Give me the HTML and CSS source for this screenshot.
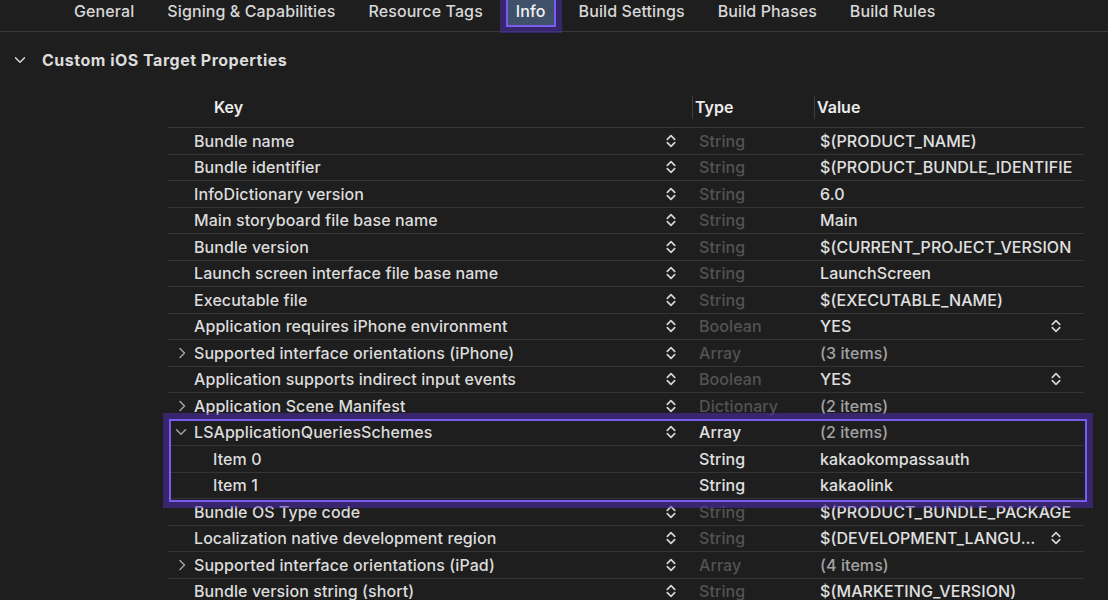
FILE: index.html
```html
<!DOCTYPE html>
<html lang="en">
<head>
<meta charset="utf-8">
<title>Info</title>
<link rel="stylesheet" href="styles.css">
</head>
<body>
<svg class="defs" xmlns="http://www.w3.org/2000/svg">
  <symbol id="updown" viewBox="0 0 10 14">
    <path d="M1.3 5.3 L5 1.6 L8.7 5.3 M1.3 8.7 L5 12.4 L8.7 8.7" fill="none" stroke="currentColor" stroke-width="1.7" stroke-linecap="round" stroke-linejoin="round"/>
  </symbol>
  <symbol id="right" viewBox="0 0 8 12">
    <path d="M2 1.5 L6.5 6 L2 10.5" fill="none" stroke="currentColor" stroke-width="1.5" stroke-linecap="round" stroke-linejoin="round"/>
  </symbol>
  <symbol id="down" viewBox="0 0 12 8">
    <path d="M1.5 1.8 L6 6.3 L10.5 1.8" fill="none" stroke="currentColor" stroke-width="1.5" stroke-linecap="round" stroke-linejoin="round"/>
  </symbol>
</svg>

<nav class="tabs">
  <span class="tab">General</span>
  <span class="tab">Signing &amp; Capabilities</span>
  <span class="tab">Resource Tags</span>
  <span class="tab active">Info</span>
  <span class="tab">Build Settings</span>
  <span class="tab">Build Phases</span>
  <span class="tab">Build Rules</span>
</nav>

<div class="section">
  <svg class="sec-chev"><use href="#down"/></svg>
  <span>Custom iOS Target Properties</span>
</div>

<div class="plist">
  <div class="head">
    <div class="h-key">Key</div>
    <div class="h-type">Type</div>
    <div class="h-value">Value</div>
  </div>

  <div class="row">
    <div class="key"><span class="disc"></span><span class="name">Bundle name</span><svg class="step"><use href="#updown"/></svg></div>
    <div class="type dim">String</div>
    <div class="value"><span class="vtext">$(PRODUCT_NAME)</span></div>
  </div>
  <div class="row">
    <div class="key"><span class="disc"></span><span class="name">Bundle identifier</span><svg class="step"><use href="#updown"/></svg></div>
    <div class="type dim">String</div>
    <div class="value"><span class="vtext">$(PRODUCT_BUNDLE_IDENTIFIE</span></div>
  </div>
  <div class="row">
    <div class="key"><span class="disc"></span><span class="name">InfoDictionary version</span><svg class="step"><use href="#updown"/></svg></div>
    <div class="type dim">String</div>
    <div class="value"><span class="vtext">6.0</span></div>
  </div>
  <div class="row">
    <div class="key"><span class="disc"></span><span class="name">Main storyboard file base name</span><svg class="step"><use href="#updown"/></svg></div>
    <div class="type dim">String</div>
    <div class="value"><span class="vtext">Main</span></div>
  </div>
  <div class="row">
    <div class="key"><span class="disc"></span><span class="name">Bundle version</span><svg class="step"><use href="#updown"/></svg></div>
    <div class="type dim">String</div>
    <div class="value"><span class="vtext">$(CURRENT_PROJECT_VERSION</span></div>
  </div>
  <div class="row">
    <div class="key"><span class="disc"></span><span class="name">Launch screen interface file base name</span><svg class="step"><use href="#updown"/></svg></div>
    <div class="type dim">String</div>
    <div class="value"><span class="vtext">LaunchScreen</span></div>
  </div>
  <div class="row">
    <div class="key"><span class="disc"></span><span class="name">Executable file</span><svg class="step"><use href="#updown"/></svg></div>
    <div class="type dim">String</div>
    <div class="value"><span class="vtext">$(EXECUTABLE_NAME)</span></div>
  </div>
  <div class="row">
    <div class="key"><span class="disc"></span><span class="name">Application requires iPhone environment</span><svg class="step"><use href="#updown"/></svg></div>
    <div class="type dim">Boolean</div>
    <div class="value"><span class="vtext">YES</span><svg class="vstep"><use href="#updown"/></svg></div>
  </div>
  <div class="row">
    <div class="key"><span class="disc"><svg class="chev-r"><use href="#right"/></svg></span><span class="name">Supported interface orientations (iPhone)</span><svg class="step"><use href="#updown"/></svg></div>
    <div class="type dim">Array</div>
    <div class="value"><span class="vtext count">(3 items)</span></div>
  </div>
  <div class="row">
    <div class="key"><span class="disc"></span><span class="name">Application supports indirect input events</span><svg class="step"><use href="#updown"/></svg></div>
    <div class="type dim">Boolean</div>
    <div class="value"><span class="vtext">YES</span><svg class="vstep"><use href="#updown"/></svg></div>
  </div>
  <div class="row">
    <div class="key"><span class="disc"><svg class="chev-r"><use href="#right"/></svg></span><span class="name">Application Scene Manifest</span><svg class="step"><use href="#updown"/></svg></div>
    <div class="type dim">Dictionary</div>
    <div class="value"><span class="vtext count">(2 items)</span></div>
  </div>

  <div class="group">
    <div class="row">
      <div class="key"><span class="disc"><svg class="chev-d"><use href="#down"/></svg></span><span class="name">LSApplicationQueriesSchemes</span><svg class="step"><use href="#updown"/></svg></div>
      <div class="type">Array</div>
      <div class="value"><span class="vtext count">(2 items)</span></div>
    </div>
    <div class="row">
      <div class="key item"><span class="name">Item 0</span></div>
      <div class="type">String</div>
      <div class="value"><span class="vtext">kakaokompassauth</span></div>
    </div>
    <div class="row">
      <div class="key item"><span class="name">Item 1</span></div>
      <div class="type">String</div>
      <div class="value"><span class="vtext">kakaolink</span></div>
    </div>
  </div>

  <div class="row">
    <div class="key"><span class="disc"></span><span class="name">Bundle OS Type code</span><svg class="step"><use href="#updown"/></svg></div>
    <div class="type dim">String</div>
    <div class="value"><span class="vtext">$(PRODUCT_BUNDLE_PACKAGE</span></div>
  </div>
  <div class="row">
    <div class="key"><span class="disc"></span><span class="name">Localization native development region</span><svg class="step"><use href="#updown"/></svg></div>
    <div class="type dim">String</div>
    <div class="value"><span class="vtext">$(DEVELOPMENT_LANGU…</span><svg class="vstep"><use href="#updown"/></svg></div>
  </div>
  <div class="row">
    <div class="key"><span class="disc"><svg class="chev-r"><use href="#right"/></svg></span><span class="name">Supported interface orientations (iPad)</span><svg class="step"><use href="#updown"/></svg></div>
    <div class="type dim">Array</div>
    <div class="value"><span class="vtext count">(4 items)</span></div>
  </div>
  <div class="row">
    <div class="key"><span class="disc"></span><span class="name">Bundle version string (short)</span><svg class="step"><use href="#updown"/></svg></div>
    <div class="type dim">String</div>
    <div class="value"><span class="vtext">$(MARKETING_VERSION)</span></div>
  </div>
</div>
</body>
</html>
```

FILE: styles.css
```css
html, body {
  margin: 0;
  padding: 0;
}

body {
  width: 1108px;
  height: 600px;
  overflow: hidden;
  background: #1e1e1e;
  color: #dedede;
  font-family: Inter, "Noto Sans", "Liberation Sans", sans-serif;
  font-size: 16px;
  font-weight: 500;
  line-height: 20px;
}

.defs {
  display: none;
}

/* ---------- tab bar ---------- */
.tabs {
  display: flex;
  align-items: flex-start;
  gap: 17px;
  height: 31px;
  padding-left: 66px;
  border-bottom: 1px solid #383838;
  letter-spacing: 0.1px;
}

.tab {
  height: 25px;
  box-sizing: border-box;
  padding: 1px 8px 4px;
  color: #d8d8d8;
  white-space: nowrap;
}

.tab.active {
  background: #3f5169;
  color: #f2f2f2;
  box-shadow: 0 0 0 2px #7a5cf0, 0 0 0 8px rgba(80, 44, 190, 0.5);
}

/* ---------- section header ---------- */
.section {
  display: flex;
  align-items: center;
  height: 20px;
  margin-top: 18px;
  padding-left: 14px;
  font-weight: 700;
  letter-spacing: 0.5px;
  color: #dcdcdc;
}

.sec-chev {
  width: 12px;
  height: 8px;
  margin-right: 16px;
  color: #d8d8d8;
}

/* ---------- property list ---------- */
.plist {
  width: 916px;
  margin: 17px 0 0 168px;
}

.head,
.row {
  display: grid;
  grid-template-columns: 524px 122px 270px;
  align-items: center;
  box-sizing: border-box;
}

.head {
  height: 41px;
  border-bottom: 1px solid #383838;
  font-weight: 600;
  color: #ececec;
}

.h-key {
  padding-left: 46px;
}

.h-type,
.h-value {
  height: 23px;
  line-height: 23px;
  padding-left: 2px;
  border-left: 1px solid #3e3e3e;
}

.row {
  height: 26.5px;
  border-bottom: 1px solid #343434;
  letter-spacing: 0.08px;
}

.key {
  display: flex;
  align-items: center;
  min-width: 0;
  color: #dcdcdc;
}

.key.item {
  padding-left: 45px;
}

.disc {
  flex: none;
  display: flex;
  align-items: center;
  width: 26px;
  height: 20px;
}

.chev-r {
  width: 8px;
  height: 12px;
  margin-left: 10px;
  color: #a2a2a2;
}

.chev-d {
  width: 12px;
  height: 8px;
  margin-left: 7px;
  color: #a2a2a2;
}

.name {
  flex: 1;
  white-space: nowrap;
  overflow: hidden;
}

.step {
  flex: none;
  width: 10px;
  height: 14px;
  margin-right: 16px;
  color: #d4d4d4;
}

.type {
  padding-left: 7px;
  color: #e0e0e0;
  white-space: nowrap;
}

.type.dim {
  color: #535353;
}

.value {
  display: flex;
  align-items: center;
  min-width: 0;
  padding-left: 6px;
  color: #e0e0e0;
}

.vtext {
  flex: 1;
  min-width: 0;
  white-space: nowrap;
  overflow: hidden;
}

.vtext.count {
  color: #a2a2a2;
}

.vstep {
  flex: none;
  width: 10px;
  height: 14px;
  margin-right: 23px;
  color: #d4d4d4;
}

/* ---------- selected group ---------- */
.group {
  position: relative;
}

.group::after {
  content: "";
  position: absolute;
  top: -1px;
  left: 1px;
  right: -3px;
  bottom: -3px;
  border: 2px solid #7a5cf0;
  box-shadow: 0 0 0 6px rgba(80, 44, 190, 0.5);
  pointer-events: none;
}
```
